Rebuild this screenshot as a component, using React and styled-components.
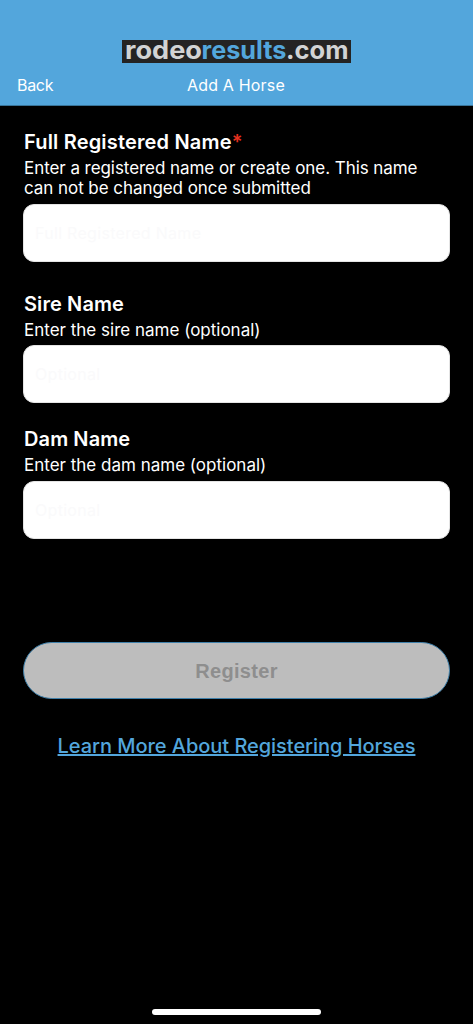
import React from "react";
import styled, { createGlobalStyle } from "styled-components";

const GlobalStyle = createGlobalStyle`
  *, *::before, *::after { box-sizing: border-box; }
  body { margin: 0; background: #000; font-family: Inter, "Liberation Sans", sans-serif; }
`;

const Screen = styled.div`
  display: flex;
  flex-direction: column;
  height: 1024px;
  background: #000;
  color: #fff;
`;

const Header = styled.header`
  height: 106px;
  padding-top: 40px;
  background: #53a6dc;
  border-bottom: 1px solid #397499;
`;

const Logo = styled.svg`
  display: block;
  width: 229px;
  height: 23px;
  margin-left: 122px;
  overflow: visible;
`;

const LogoText = styled.text`
  font-family: Inter, sans-serif;
  font-size: 25px;
  font-weight: 700;
  fill: ${(p) => (p.$accent ? "#53a6dc" : "#d2d3d4")};
`;

const NavBar = styled.nav`
  display: grid;
  grid-template-columns: 187px 1fr;
  margin-top: 12px;
  line-height: 20px;
  font-size: 16px;
`;

const BackLink = styled.span`
  padding-left: 17px;
  letter-spacing: -0.3px;
`;

const PageTitle = styled.span`
  letter-spacing: 0.18px;
`;

const Form = styled.main`
  display: flex;
  flex-direction: column;
  padding: 24px 23px 0 23px;
`;

const Field = styled.label`
  display: flex;
  flex-direction: column;
  margin-bottom: ${(p) => p.$gap}px;
`;

const FieldTitle = styled.span`
  padding-left: 1px;
  font-size: 20px;
  font-weight: 600;
  line-height: 24px;
  letter-spacing: ${(p) => p.$spacing || 0}px;
`;

const Required = styled.span`
  color: #e6311f;
`;

const Hint = styled.span`
  padding-left: 1px;
  margin: 4px 0 ${(p) => p.$below || 6}px;
  font-size: 17px;
  font-weight: 400;
  line-height: 20px;
  letter-spacing: ${(p) => p.$spacing || 0}px;
`;

const Input = styled.input`
  height: 58px;
  padding: 0 11px;
  border: 1px solid #e4e4e4;
  border-radius: 11px;
  outline: none;
  background: #fff;
  font: 400 16px/20px Inter, sans-serif;
  letter-spacing: 0.3px;
  &::placeholder { color: #fafafb; opacity: 1; }
`;

const RegisterButton = styled.button`
  height: 57px;
  border: 1px solid #3f80aa;
  border-radius: 29px;
  background: #bdbdbd;
  color: #8e8e8e;
  font: 700 20px/24px "Liberation Sans", Arial, sans-serif;
  letter-spacing: 0.3px;
`;

const LearnMore = styled.a`
  align-self: center;
  margin-top: 35px;
  color: #53a6dc;
  font-size: 20px;
  font-weight: 500;
  line-height: 24px;
  letter-spacing: -0.04px;
  text-decoration: underline;
  text-decoration-thickness: 1.5px;
  text-underline-offset: 1px;
`;

const HomeIndicator = styled.div`
  width: 169px;
  height: 6px;
  margin: auto auto 9px 152px;
  border-radius: 3px;
  background: #fff;
`;

export default function App() {
  return (
    <Screen>
      <GlobalStyle />
      <Header>
        <Logo viewBox="0 0 229 23" role="img" aria-label="rodeoresults.com">
          <rect width="229" height="23" fill="#242323" />
          <LogoText x="3" y="19.3" textLength="77" lengthAdjust="spacingAndGlyphs">rodeo</LogoText>
          <LogoText $accent x="79.5" y="19.3" textLength="85" lengthAdjust="spacingAndGlyphs">results</LogoText>
          <LogoText x="164" y="19.3" textLength="62.5" lengthAdjust="spacingAndGlyphs">.com</LogoText>
        </Logo>
        <NavBar>
          <BackLink>Back</BackLink>
          <PageTitle>Add A Horse</PageTitle>
        </NavBar>
      </Header>
      <Form>
        <Field $gap={30}>
          <FieldTitle $spacing={0.17}>Full Registered Name<Required>*</Required></FieldTitle>
          <Hint $spacing={-0.06}>Enter a registered name or create one. This name can not be changed once submitted</Hint>
          <Input placeholder="Full Registered Name" />
        </Field>
        <Field $gap={24}>
          <FieldTitle $spacing={0.1}>Sire Name</FieldTitle>
          <Hint $below={5}>Enter the sire name (optional)</Hint>
          <Input placeholder="Optional" />
        </Field>
        <Field $gap={103}>
          <FieldTitle $spacing={0.1}>Dam Name</FieldTitle>
          <Hint>Enter the dam name (optional)</Hint>
          <Input placeholder="Optional" />
        </Field>
        <RegisterButton disabled>Register</RegisterButton>
        <LearnMore>Learn More About Registering Horses</LearnMore>
      </Form>
      <HomeIndicator />
    </Screen>
  );
}
